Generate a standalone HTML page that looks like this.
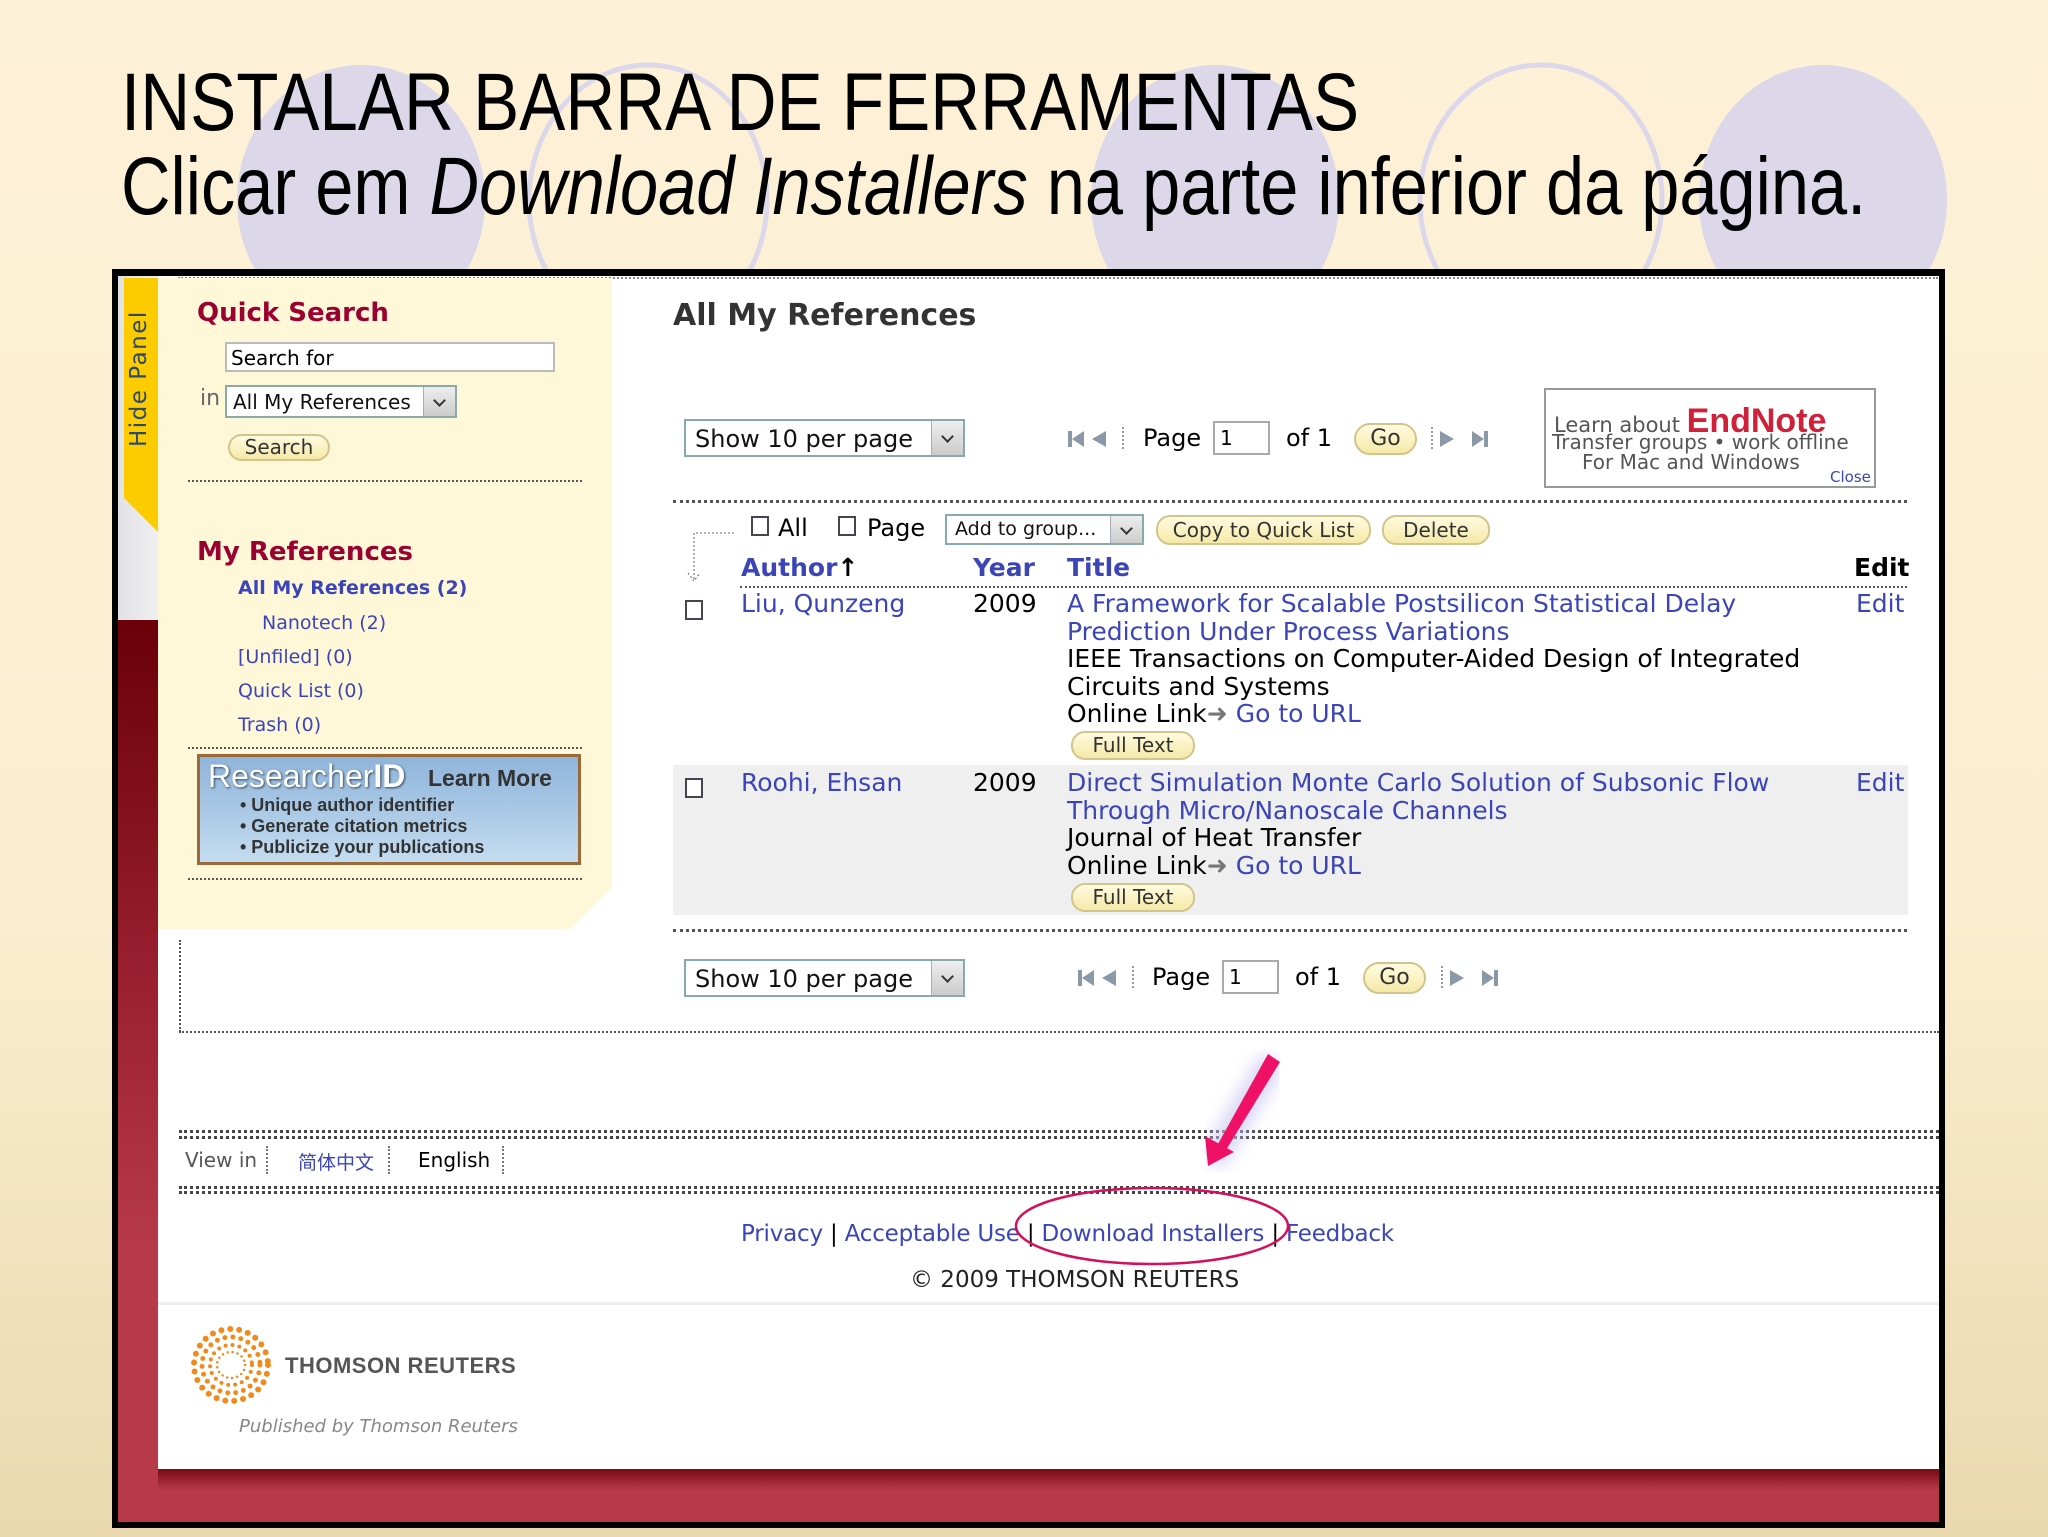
<!DOCTYPE html>
<html><head><meta charset="utf-8"><style>
*{margin:0;padding:0;box-sizing:border-box}
body{width:2048px;height:1537px;position:relative;overflow:hidden;background:linear-gradient(#fdf1d8 0%,#fbedcf 60%,#ead9ae 100%);font-family:"DejaVu Sans","Liberation Sans",sans-serif}
.a{position:absolute;white-space:nowrap}
.t{font-family:"Liberation Sans",sans-serif;font-size:82px;color:#000;transform:scaleX(.843);transform-origin:left top;line-height:1}
.blue{color:#3c45b8}
.dot{position:absolute;border-top:2px dotted #555;height:0}
.btn{position:absolute;border:2px solid #d2c48a;border-radius:14px;background:linear-gradient(#fffbe0,#f5e9a8);color:#333;text-align:center;font-size:20px}
.sel{position:absolute;border:2px solid #8aa;background:#fff;font-size:24px;color:#111}
.sel i{position:absolute;right:0;top:0;bottom:0;width:32px;background:linear-gradient(#eee,#ccc);border-left:1px solid #aab}
.sel i:after{content:"";position:absolute;left:11px;top:50%;margin-top:-6px;width:7px;height:7px;border-right:2px solid #333;border-bottom:2px solid #333;transform:rotate(45deg)}
.cb{position:absolute;width:18px;height:20px;border:2px solid #445;background:#fff}
.r{font-size:25px;line-height:27.5px}
</style></head><body>
<svg class="a" style="left:0;top:0" width="2048" height="300">
<ellipse cx="361" cy="200" rx="124" ry="135" fill="#dcd8ea"/>
<ellipse cx="648" cy="200" rx="119" ry="135" fill="none" stroke="#dcd8ea" stroke-width="5"/>
<ellipse cx="1215" cy="200" rx="124" ry="135" fill="#dcd8ea"/>
<ellipse cx="1541" cy="200" rx="121" ry="135" fill="none" stroke="#dcd8ea" stroke-width="5"/>
<ellipse cx="1823" cy="200" rx="124" ry="135" fill="#dcd8ea"/>
</svg>
<div class="a t" style="left:121px;top:62px">INSTALAR BARRA DE FERRAMENTAS</div>
<div class="a t" style="left:121px;top:146px;transform:scaleX(.836)">Clicar em <i>Download Installers</i> na parte inferior da página.</div>

<!-- frame -->
<div class="a" style="left:112px;top:269px;width:1833px;height:1259px;background:#000"></div>
<div class="a" style="left:118px;top:276px;width:1821px;height:1246px;background:#fff"></div>
<div class="dot" style="left:178px;top:277px;width:1760px;border-top-color:#888"></div>
<div class="a" style="left:118px;top:276px;width:40px;height:345px;background:linear-gradient(90deg,#e2e2e6,#f0f0f2)"></div>
<div class="a" style="left:118px;top:620px;width:40px;height:902px;background:linear-gradient(#6a0008,#9a2030 40%,#b83a48 70%,#b83a48)"></div>
<svg class="a" style="left:124px;top:278px" width="34" height="255"><polygon points="0,0 34,0 34,254 0,220" fill="#fccb00"/></svg>
<div class="a" style="left:126px;top:447px;transform:rotate(-90deg);transform-origin:left top;font-size:23px;color:#2d4a6a;letter-spacing:1.5px">Hide Panel</div>

<!-- left panel -->
<div class="a" style="left:158px;top:278px;width:454px;height:651px;background:#fef7d8;box-shadow:6px 6px 6px rgba(0,0,0,.18);clip-path:polygon(0 0,100% 0,100% calc(100% - 42px),calc(100% - 42px) 100%,0 100%)"></div>
<div class="a" style="left:197px;top:298px;font-size:26px;font-weight:bold;color:#9a0030">Quick Search</div>
<div class="a" style="left:225px;top:342px;width:330px;height:30px;border:2px solid #bbb;background:#fff;font-size:20px;padding:2px 4px">Search for</div>
<div class="a" style="left:200px;top:386px;font-size:22px;color:#666">in</div>
<div class="sel" style="left:225px;top:385px;width:232px;height:33px;font-size:20px;padding:3px 6px">All My References<i></i></div>
<div class="btn" style="left:228px;top:434px;width:102px;height:27px;line-height:22px">Search</div>
<div class="dot" style="left:188px;top:480px;width:394px"></div>
<div class="a" style="left:197px;top:537px;font-size:26px;font-weight:bold;color:#9a0030">My References</div>
<div class="a blue" style="left:238px;top:577px;font-size:19px;font-weight:bold">All My References (2)</div>
<div class="a blue" style="left:262px;top:612px;font-size:19px">Nanotech (2)</div>
<div class="a blue" style="left:238px;top:646px;font-size:19px">[Unfiled] (0)</div>
<div class="a blue" style="left:238px;top:680px;font-size:19px">Quick List (0)</div>
<div class="a blue" style="left:238px;top:714px;font-size:19px">Trash (0)</div>
<div class="dot" style="left:188px;top:747px;width:394px"></div>
<div class="a" style="left:197px;top:754px;width:384px;height:111px;border:3px solid #9a6a3a;background:linear-gradient(#8fb4da,#c4dcf0)">
<div class="a" style="left:8px;top:1px;font-size:32px;color:#fff;text-shadow:1px 1px 2px #345;font-family:'Liberation Sans',sans-serif">Researcher<b>ID</b></div>
<div class="a" style="left:228px;top:8px;font-size:23px;color:#333;font-weight:bold;font-family:'Liberation Sans',sans-serif">Learn More</div>
<div class="a" style="left:40px;top:38px;font-size:18px;color:#333;line-height:21px;font-weight:bold;font-family:'Liberation Sans',sans-serif">• Unique author identifier<br>• Generate citation metrics<br>• Publicize your publications</div>
</div>
<div class="dot" style="left:188px;top:878px;width:394px"></div>

<!-- main -->
<div class="a" style="left:673px;top:298px;font-size:30px;font-weight:bold;color:#333">All My References</div>
<div class="sel" style="left:684px;top:419px;width:281px;height:38px;padding:4px 9px">Show 10 per page<i></i></div>
<svg class="a" style="left:1066px;top:425px" width="60" height="28"><path d="M2 6v16h4V6zM6 14l12-8v16zM26 14l14-8v16z" fill="#8a98a8"/><path d="M57 2v24" stroke="#333" stroke-dasharray="2 2"/></svg>
<div class="a" style="left:1143px;top:424px;font-size:24px">Page</div>
<div class="a" style="left:1213px;top:421px;width:57px;height:34px;border:2px solid #aaa;font-size:20px;padding:3px 5px">1</div>
<div class="a" style="left:1286px;top:424px;font-size:24px">of 1</div>
<div class="btn" style="left:1354px;top:423px;width:63px;height:32px;border-radius:16px;line-height:28px;font-size:22px">Go</div>
<svg class="a" style="left:1430px;top:425px" width="66" height="28"><path d="M2 2v24" stroke="#333" stroke-dasharray="2 2"/><path d="M10 6l14 8-14 8zM42 6l12 8-12 8zM54 6h4v16h-4z" fill="#8a98a8"/></svg>
<div class="a" style="left:1544px;top:388px;width:332px;height:100px;border:2px solid #999;background:#fff">
<div class="a" style="left:8px;top:12px;font-size:21px;color:#555">Learn about <b style="color:#d0203a;font-size:34px;font-family:'Liberation Sans',sans-serif">EndNote</b></div>
<div class="a" style="left:6px;top:40px;font-size:20px;color:#555">Transfer groups • work offline</div>
<div class="a" style="left:36px;top:60px;font-size:20px;color:#555">For Mac and Windows</div>
<div class="a blue" style="left:284px;top:78px;font-size:15px">Close</div>
</div>
<div class="dot" style="left:673px;top:500px;width:1234px;border-top:3px dotted #555"></div>

<svg class="a" style="left:678px;top:525px" width="60" height="60"><path d="M56 8H16v48M10 48l6 8 6-8" fill="none" stroke="#666" stroke-dasharray="2 2"/></svg>
<div class="cb" style="left:751px;top:516px"></div><div class="a" style="left:778px;top:514px;font-size:24px">All</div>
<div class="cb" style="left:838px;top:516px"></div><div class="a" style="left:867px;top:514px;font-size:24px">Page</div>
<div class="sel" style="left:945px;top:514px;width:199px;height:31px;font-size:19px;padding:2px 8px">Add to group...<i></i></div>
<div class="btn" style="left:1156px;top:515px;width:215px;height:30px;line-height:26px">Copy to Quick List</div>
<div class="btn" style="left:1382px;top:515px;width:108px;height:30px;line-height:26px">Delete</div>

<div class="a blue" style="left:741px;top:553px;font-size:25px;font-weight:bold">Author<span style="color:#000">↑</span></div>
<div class="a blue" style="left:973px;top:553px;font-size:25px;font-weight:bold">Year</div>
<div class="a blue" style="left:1067px;top:553px;font-size:25px;font-weight:bold">Title</div>
<div class="a" style="left:1854px;top:553px;font-size:25px;font-weight:bold">Edit</div>
<div class="dot" style="left:740px;top:586px;width:1167px"></div>

<div class="cb" style="left:685px;top:600px"></div>
<div class="a blue r" style="left:741px;top:590px">Liu, Qunzeng</div>
<div class="a r" style="left:973px;top:590px">2009</div>
<div class="a r" style="left:1067px;top:590px"><span class="blue">A Framework for Scalable Postsilicon Statistical Delay<br>Prediction Under Process Variations</span><br>IEEE Transactions on Computer-Aided Design of Integrated<br>Circuits and Systems<br>Online Link<span style="color:#777">➜</span> <span class="blue">Go to URL</span></div>
<div class="a blue r" style="left:1856px;top:590px">Edit</div>
<div class="btn" style="left:1071px;top:731px;width:124px;height:29px;line-height:25px">Full Text</div>

<div class="a" style="left:673px;top:765px;width:1235px;height:150px;background:#efefef"></div>
<div class="cb" style="left:685px;top:778px"></div>
<div class="a blue r" style="left:741px;top:769px">Roohi, Ehsan</div>
<div class="a r" style="left:973px;top:769px">2009</div>
<div class="a r" style="left:1067px;top:769px"><span class="blue">Direct Simulation Monte Carlo Solution of Subsonic Flow<br>Through Micro/Nanoscale Channels</span><br>Journal of Heat Transfer<br>Online Link<span style="color:#777">➜</span> <span class="blue">Go to URL</span></div>
<div class="a blue r" style="left:1856px;top:769px">Edit</div>
<div class="btn" style="left:1071px;top:883px;width:124px;height:29px;line-height:25px">Full Text</div>
<div class="dot" style="left:673px;top:929px;width:1234px;border-top:3px dotted #555"></div>

<div class="sel" style="left:684px;top:959px;width:281px;height:38px;padding:4px 9px">Show 10 per page<i></i></div>
<svg class="a" style="left:1076px;top:964px" width="60" height="28"><path d="M2 6v16h4V6zM6 14l12-8v16zM26 14l14-8v16z" fill="#8a98a8"/><path d="M57 2v24" stroke="#333" stroke-dasharray="2 2"/></svg>
<div class="a" style="left:1152px;top:963px;font-size:24px">Page</div>
<div class="a" style="left:1222px;top:960px;width:57px;height:34px;border:2px solid #aaa;font-size:20px;padding:3px 5px">1</div>
<div class="a" style="left:1295px;top:963px;font-size:24px">of 1</div>
<div class="btn" style="left:1363px;top:962px;width:63px;height:32px;border-radius:16px;line-height:28px;font-size:22px">Go</div>
<svg class="a" style="left:1440px;top:964px" width="66" height="28"><path d="M2 2v24" stroke="#333" stroke-dasharray="2 2"/><path d="M10 6l14 8-14 8zM42 6l12 8-12 8zM54 6h4v16h-4z" fill="#8a98a8"/></svg>

<div class="a" style="left:179px;top:940px;height:92px;border-left:2px dotted #555"></div>
<div class="dot" style="left:179px;top:1031px;width:1760px"></div>
<div class="dot" style="left:179px;top:1130px;width:1760px;border-top:3px dotted #444"></div>
<div class="dot" style="left:179px;top:1136px;width:1760px;border-top:3px dotted #444"></div>
<div class="a" style="left:185px;top:1148px;font-size:20px;color:#555">View in</div>
<div class="a" style="left:266px;top:1146px;height:28px;border-left:2px dotted #777"></div>
<div class="a blue" style="left:298px;top:1148px;font-size:19px;font-family:'Liberation Sans','Noto Sans CJK SC',sans-serif">简体中文</div>
<div class="a" style="left:388px;top:1146px;height:28px;border-left:2px dotted #777"></div>
<div class="a" style="left:418px;top:1148px;font-size:20px">English</div>
<div class="a" style="left:502px;top:1146px;height:28px;border-left:2px dotted #777"></div>
<div class="dot" style="left:179px;top:1186px;width:1760px;border-top:3px dotted #444"></div>
<div class="dot" style="left:179px;top:1191px;width:1760px;border-top:3px dotted #444"></div>

<div class="a" style="left:741px;top:1221px;font-size:23px;letter-spacing:-0.2px"><span class="blue">Privacy</span> | <span class="blue">Acceptable Use</span> | <span class="blue">Download Installers</span> | <span class="blue">Feedback</span></div>
<div class="a" style="left:910px;top:1267px;font-size:23px;color:#222">© 2009 THOMSON REUTERS</div>
<div class="a" style="left:158px;top:1302px;width:1781px;height:3px;background:#eee"></div>

<svg class="a" style="left:190px;top:1326px" width="82" height="78">
<g fill="none" stroke="#f08a1c" stroke-linecap="round">
<ellipse cx="41" cy="39" rx="37" ry="36" stroke-width="6" stroke-dasharray="0 9"/>
<ellipse cx="41" cy="39" rx="29" ry="28" stroke-width="5" stroke-dasharray="0 8"/>
<ellipse cx="41" cy="39" rx="21" ry="20" stroke-width="4" stroke-dasharray="0 7"/>
<ellipse cx="41" cy="39" rx="14" ry="13" stroke-width="2.5" stroke-dasharray="0 5"/>
</g></svg>
<div class="a" style="left:285px;top:1353px;font-size:22px;font-weight:bold;color:#555;font-family:'Liberation Sans',sans-serif;letter-spacing:0.5px">THOMSON REUTERS</div>
<div class="a" style="left:239px;top:1416px;font-size:18px;font-style:italic;color:#888">Published by Thomson Reuters</div>
<div class="a" style="left:158px;top:1469px;width:1781px;height:53px;background:linear-gradient(#7a0a14,#b83a48 40%,#b83a48)"></div>

<svg class="a" style="left:1000px;top:1040px" width="320" height="260">
<defs><filter id="g"><feGaussianBlur stdDeviation="8"/></filter></defs>
<path d="M273 20L212 122" stroke="#c8c4f0" stroke-width="26" filter="url(#g)" opacity=".7"/>
<polygon points="268,14 280,22 226,110 218,104" fill="#ee1166"/>
<polygon points="208,126 205,96 234,112" fill="#ee1166"/>
<ellipse cx="152" cy="186" rx="136" ry="38" fill="none" stroke="#d4105a" stroke-width="2.5"/>
</svg>
</body></html>
